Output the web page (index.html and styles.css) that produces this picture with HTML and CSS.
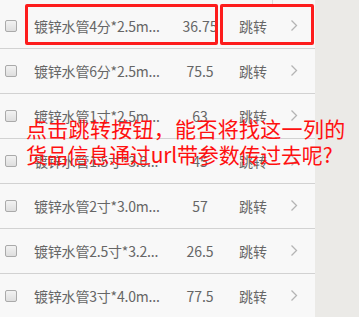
FILE: index.html
```html
<!DOCTYPE html>
<html lang="zh-CN">
<head>
  <meta charset="UTF-8">
  <meta name="viewport" content="width=device-width, initial-scale=1.0">
  <title>货品列表</title>
  <link rel="stylesheet" href="styles.css">
</head>
<body>

  <main class="goodsList">
    <div class="goodsList__top"></div>

    <div class="goodsList__row">
      <span class="checkbox"></span>
      <span class="goodsList__row__name">镀锌水管4分*2.5m...</span>
      <span class="goodsList__row__price">36.75</span>
      <span class="goodsList__row__jump">跳转</span>
      <svg class="chevron" width="8" height="13" viewBox="0 0 8 13"><polyline points="1.5,1.5 6.5,6.5 1.5,11.5" fill="none" stroke="#b4b4b4" stroke-width="1.3"/></svg>
    </div>

    <div class="goodsList__row">
      <span class="checkbox"></span>
      <span class="goodsList__row__name">镀锌水管6分*2.5m...</span>
      <span class="goodsList__row__price">75.5</span>
      <span class="goodsList__row__jump">跳转</span>
      <svg class="chevron" width="8" height="13" viewBox="0 0 8 13"><polyline points="1.5,1.5 6.5,6.5 1.5,11.5" fill="none" stroke="#b4b4b4" stroke-width="1.3"/></svg>
    </div>

    <div class="goodsList__row">
      <span class="checkbox"></span>
      <span class="goodsList__row__name">镀锌水管1寸*2.5m...</span>
      <span class="goodsList__row__price">63</span>
      <span class="goodsList__row__jump">跳转</span>
      <svg class="chevron" width="8" height="13" viewBox="0 0 8 13"><polyline points="1.5,1.5 6.5,6.5 1.5,11.5" fill="none" stroke="#b4b4b4" stroke-width="1.3"/></svg>
    </div>

    <div class="goodsList__row">
      <span class="checkbox"></span>
      <span class="goodsList__row__name">镀锌水管1.5寸*3.0...</span>
      <span class="goodsList__row__price">45</span>
      <span class="goodsList__row__jump">跳转</span>
      <svg class="chevron" width="8" height="13" viewBox="0 0 8 13"><polyline points="1.5,1.5 6.5,6.5 1.5,11.5" fill="none" stroke="#b4b4b4" stroke-width="1.3"/></svg>
    </div>

    <div class="goodsList__row">
      <span class="checkbox"></span>
      <span class="goodsList__row__name">镀锌水管2寸*3.0m...</span>
      <span class="goodsList__row__price">57</span>
      <span class="goodsList__row__jump">跳转</span>
      <svg class="chevron" width="8" height="13" viewBox="0 0 8 13"><polyline points="1.5,1.5 6.5,6.5 1.5,11.5" fill="none" stroke="#b4b4b4" stroke-width="1.3"/></svg>
    </div>

    <div class="goodsList__row">
      <span class="checkbox"></span>
      <span class="goodsList__row__name">镀锌水管2.5寸*3.2...</span>
      <span class="goodsList__row__price">26.5</span>
      <span class="goodsList__row__jump">跳转</span>
      <svg class="chevron" width="8" height="13" viewBox="0 0 8 13"><polyline points="1.5,1.5 6.5,6.5 1.5,11.5" fill="none" stroke="#b4b4b4" stroke-width="1.3"/></svg>
    </div>

    <div class="goodsList__row">
      <span class="checkbox"></span>
      <span class="goodsList__row__name">镀锌水管3寸*4.0m...</span>
      <span class="goodsList__row__price">77.5</span>
      <span class="goodsList__row__jump">跳转</span>
      <svg class="chevron" width="8" height="13" viewBox="0 0 8 13"><polyline points="1.5,1.5 6.5,6.5 1.5,11.5" fill="none" stroke="#b4b4b4" stroke-width="1.3"/></svg>
    </div>

    <!-- annotation over the screenshot -->
    <div class="mark mark--name"></div>
    <div class="mark mark--jump"></div>
    <p class="note">点击跳转按钮，能否将找这一列的<br><span class="note__tight">货品信息通过url带参数传过去呢?</span></p>
  </main>

  <aside class="sideGap"></aside>

</body>
</html>
```

FILE: styles.css
```css
* {
  box-sizing: border-box;
  padding: 0;
  margin: 0;
}
body {
  display: flex;
  height: 100vh;
  overflow: hidden;
  background-color: #ebeae7;
  font-family: "Noto Sans CJK SC", "Noto Sans", sans-serif;
}
.goodsList {
  position: relative;
  width: 315px;
  height: 100%;
  background-color: #f8f8f8;
}
.goodsList__top {
  width: 273px;
  height: 4px;
  border-right: 1px solid #dcdcdc;
}
.goodsList__row {
  display: grid;
  grid-template-columns: 34px 138px 56px 50px 1fr;
  align-items: center;
  height: 45px;
  border-bottom: 1px solid #d2d2d2;
  font-size: 14px;
  color: #666;
  padding-bottom: 1px;
}
.checkbox {
  display: block;
  width: 12px;
  height: 12px;
  margin-left: 5px;
  border: 1px solid #aaa;
  border-radius: 2px;
  background: linear-gradient(#f2f2f2, #dedede);
}
.goodsList__row__name {
  white-space: nowrap;
  letter-spacing: -0.2px;
}
.goodsList__row__price,
.goodsList__row__jump {
  text-align: center;
}
.chevron {
  margin-left: 12px;
}
.mark {
  position: absolute;
  top: 4px;
  height: 41px;
  border: 3px solid #fd1c1c;
  border-radius: 2px;
}
.mark--name {
  left: 25px;
  width: 193px;
}
.mark--jump {
  left: 220px;
  width: 94px;
}
.note {
  position: absolute;
  top: 115px;
  left: 26px;
  width: 330px;
  font-size: 21px;
  line-height: 26px;
  color: #ff1010;
  white-space: nowrap;
  letter-spacing: 0.3px;
}
.note__tight {
  letter-spacing: -0.2px;
}
.sideGap {
  flex-grow: 1;
}
```
